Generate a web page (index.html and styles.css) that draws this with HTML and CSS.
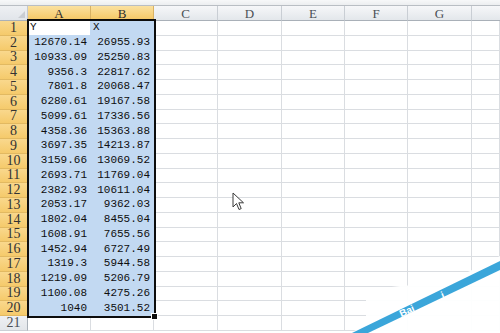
FILE: index.html
```html
<!DOCTYPE html>
<html>
<head>
<meta charset="utf-8">
<link rel="stylesheet" href="styles.css">
</head>
<body>
<div class="page">
  <div class="topstrip"></div>
  <div class="sheet">
    <div class="corner"></div>
    <div class="ch sel">A</div><div class="ch sel">B</div><div class="ch">C</div><div class="ch">D</div><div class="ch">E</div><div class="ch">F</div><div class="ch">G</div><div class="ch last"></div>

    <div class="rh sel">1</div><div class="c active txt">Y</div><div class="c s txt">X</div><div class="c"></div><div class="c"></div><div class="c"></div><div class="c"></div><div class="c"></div><div class="c"></div>
    <div class="rh sel">2</div><div class="c s">12670.14</div><div class="c s">26955.93</div><div class="c"></div><div class="c"></div><div class="c"></div><div class="c"></div><div class="c"></div><div class="c"></div>
    <div class="rh sel">3</div><div class="c s">10933.09</div><div class="c s">25250.83</div><div class="c"></div><div class="c"></div><div class="c"></div><div class="c"></div><div class="c"></div><div class="c"></div>
    <div class="rh sel">4</div><div class="c s">9356.3</div><div class="c s">22817.62</div><div class="c"></div><div class="c"></div><div class="c"></div><div class="c"></div><div class="c"></div><div class="c"></div>
    <div class="rh sel">5</div><div class="c s">7801.8</div><div class="c s">20068.47</div><div class="c"></div><div class="c"></div><div class="c"></div><div class="c"></div><div class="c"></div><div class="c"></div>
    <div class="rh sel">6</div><div class="c s">6280.61</div><div class="c s">19167.58</div><div class="c"></div><div class="c"></div><div class="c"></div><div class="c"></div><div class="c"></div><div class="c"></div>
    <div class="rh sel">7</div><div class="c s">5099.61</div><div class="c s">17336.56</div><div class="c"></div><div class="c"></div><div class="c"></div><div class="c"></div><div class="c"></div><div class="c"></div>
    <div class="rh sel">8</div><div class="c s">4358.36</div><div class="c s">15363.88</div><div class="c"></div><div class="c"></div><div class="c"></div><div class="c"></div><div class="c"></div><div class="c"></div>
    <div class="rh sel">9</div><div class="c s">3697.35</div><div class="c s">14213.87</div><div class="c"></div><div class="c"></div><div class="c"></div><div class="c"></div><div class="c"></div><div class="c"></div>
    <div class="rh sel">10</div><div class="c s">3159.66</div><div class="c s">13069.52</div><div class="c"></div><div class="c"></div><div class="c"></div><div class="c"></div><div class="c"></div><div class="c"></div>
    <div class="rh sel">11</div><div class="c s">2693.71</div><div class="c s">11769.04</div><div class="c"></div><div class="c"></div><div class="c"></div><div class="c"></div><div class="c"></div><div class="c"></div>
    <div class="rh sel">12</div><div class="c s">2382.93</div><div class="c s">10611.04</div><div class="c"></div><div class="c"></div><div class="c"></div><div class="c"></div><div class="c"></div><div class="c"></div>
    <div class="rh sel">13</div><div class="c s">2053.17</div><div class="c s">9362.03</div><div class="c"></div><div class="c"></div><div class="c"></div><div class="c"></div><div class="c"></div><div class="c"></div>
    <div class="rh sel">14</div><div class="c s">1802.04</div><div class="c s">8455.04</div><div class="c"></div><div class="c"></div><div class="c"></div><div class="c"></div><div class="c"></div><div class="c"></div>
    <div class="rh sel">15</div><div class="c s">1608.91</div><div class="c s">7655.56</div><div class="c"></div><div class="c"></div><div class="c"></div><div class="c"></div><div class="c"></div><div class="c"></div>
    <div class="rh sel">16</div><div class="c s">1452.94</div><div class="c s">6727.49</div><div class="c"></div><div class="c"></div><div class="c"></div><div class="c"></div><div class="c"></div><div class="c"></div>
    <div class="rh sel">17</div><div class="c s">1319.3</div><div class="c s">5944.58</div><div class="c"></div><div class="c"></div><div class="c"></div><div class="c"></div><div class="c"></div><div class="c"></div>
    <div class="rh sel">18</div><div class="c s">1219.09</div><div class="c s">5206.79</div><div class="c"></div><div class="c"></div><div class="c"></div><div class="c"></div><div class="c"></div><div class="c"></div>
    <div class="rh sel">19</div><div class="c s">1100.08</div><div class="c s">4275.26</div><div class="c"></div><div class="c"></div><div class="c"></div><div class="c"></div><div class="c"></div><div class="c"></div>
    <div class="rh sel">20</div><div class="c s">1040</div><div class="c s">3501.52</div><div class="c"></div><div class="c"></div><div class="c"></div><div class="c"></div><div class="c"></div><div class="c"></div>
    <div class="rh">21</div><div class="c"></div><div class="c"></div><div class="c"></div><div class="c"></div><div class="c"></div><div class="c"></div><div class="c"></div><div class="c"></div>
  </div>

  <div class="selection"></div>
  <div class="handle"></div>

  <svg class="cursor" width="14" height="20" viewBox="0 0 14 20">
    <path d="M1 1 L1 15 L4.5 11.5 L7 17.5 L9.2 16.6 L6.8 10.8 L11.5 10.8 Z" fill="#ffffff" stroke="#3a3a3a" stroke-width="1" stroke-linejoin="round"/>
  </svg>

  <svg class="watermark" width="150" height="80" viewBox="350 253 150 80">
    <polygon points="366,290 400,286 446,283 500,256 500,333 350,333 366,325" fill="#ffffff" opacity="0.95"/>
    <polygon points="352,333 500,261 500,270 368,333" fill="#3ba6da"/>
  </svg>
  <div class="wm-text">Bai<span class="gap"></span>i</div>
</div>
</body>
</html>
```

FILE: styles.css
```css
html, body {
  margin: 0;
  padding: 0;
  background: #ffffff;
  overflow: hidden;
}

.page {
  position: relative;
  width: 500px;
  height: 333px;
  overflow: hidden;
  background: #ffffff;
}

.topstrip {
  height: 5px;
  background: linear-gradient(#f7f8f9, #eceef0);
  border-bottom: 1px solid #b9bec4;
}

.sheet {
  display: grid;
  grid-template-columns: 28px 63px 63px 64px 64px 63px 63px 64px 1fr;
  grid-template-rows: 15px;
  grid-auto-rows: 14.75px;
}

.corner {
  position: relative;
  background: linear-gradient(#eef0f3, #e1e5ea);
  border-right: 1px solid #c3c8ce;
  border-bottom: 1px solid #a9b0b8;
  box-sizing: border-box;
}

.corner::after {
  content: "";
  position: absolute;
  right: 2px;
  bottom: 2px;
  border-left: 7px solid transparent;
  border-bottom: 7px solid #c9cdd2;
}

.ch {
  box-sizing: border-box;
  background: linear-gradient(#f6f7f9, #e3e7eb);
  border-right: 1px solid #c9ced4;
  border-bottom: 1px solid #a9b0b8;
  font-family: "Liberation Serif", "DejaVu Serif", serif;
  font-size: 13px;
  color: #4a4f55;
  display: flex;
  align-items: center;
  justify-content: center;
  line-height: 1;
}

.ch.sel {
  background: linear-gradient(#fbe1a0, #f5c764);
  border-right: 1px solid #d9b263;
  border-bottom: 1px solid #c9a04e;
  color: #2c2c2c;
}

.ch.last {
  border-right: none;
}

.rh {
  box-sizing: border-box;
  background: linear-gradient(#eef0f3, #e3e6ea);
  border-right: 1px solid #a9b0b8;
  border-bottom: 1px solid #cbd0d6;
  font-family: "Liberation Serif", "DejaVu Serif", serif;
  font-size: 14px;
  color: #4a4f55;
  display: flex;
  align-items: center;
  justify-content: center;
  line-height: 1;
}

.rh.sel {
  background: linear-gradient(#f9d88d, #f5ca6b);
  border-right: 1px solid #c9a04e;
  border-bottom: 1px solid #e2b961;
  color: #333333;
}

.c {
  box-sizing: border-box;
  border-right: 1px solid #dadde1;
  border-bottom: 1px solid #dadde1;
  font-family: "Liberation Mono", "DejaVu Sans Mono", monospace;
  font-size: 11px;
  color: #0e0e0e;
  display: flex;
  align-items: center;
  justify-content: flex-end;
  padding-right: 3px;
  line-height: 1;
  white-space: nowrap;
}

.c.s {
  background: #c2d9f2;
  border-right-color: #c2d9f2;
  border-bottom-color: #c2d9f2;
}

.c.active {
  background: #ffffff;
  border-right-color: #c2d9f2;
  border-bottom-color: #c2d9f2;
}

.c.txt {
  justify-content: flex-start;
  padding-left: 2px;
}

.selection {
  position: absolute;
  left: 27px;
  top: 19px;
  width: 129px;
  height: 299px;
  box-sizing: border-box;
  border: 2px solid #0d0d0d;
  pointer-events: none;
}

.handle {
  position: absolute;
  left: 152px;
  top: 314px;
  width: 5px;
  height: 5px;
  background: #0d0d0d;
  outline: 1px solid #ffffff;
}

.cursor {
  position: absolute;
  left: 232px;
  top: 192px;
}

.watermark {
  position: absolute;
  left: 350px;
  top: 253px;
}

.wm-text {
  position: absolute;
  left: 402px;
  top: 309px;
  font-family: "Liberation Sans", Arial, sans-serif;
  font-size: 10px;
  font-weight: bold;
  line-height: 10px;
  color: #ffffff;
  transform: rotate(-24deg);
  transform-origin: left bottom;
  white-space: nowrap;
}

.wm-text .gap {
  display: inline-block;
  width: 30px;
}
```
